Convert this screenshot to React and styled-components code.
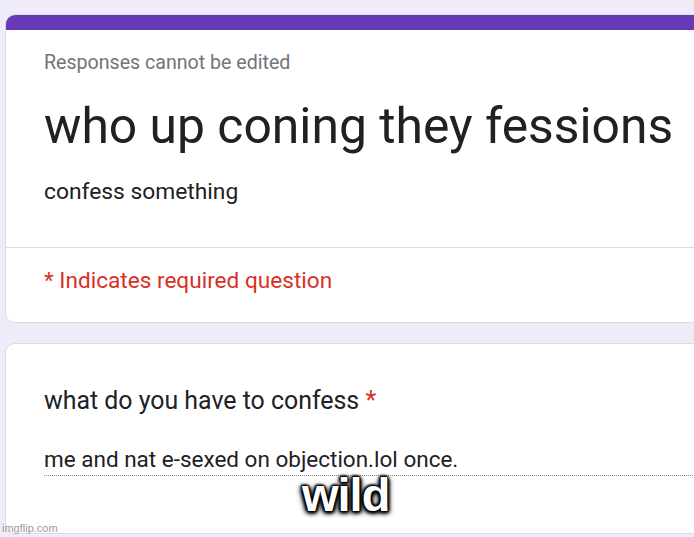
import React from "react";
import styled, { createGlobalStyle } from "styled-components";

const Global = createGlobalStyle`
  html, body { margin: 0; padding: 0; }
  body {
    background: #f0ebf8;
    font-family: Roboto, "Noto Sans", Arial, sans-serif;
    overflow: hidden;
  }
`;

const Page = styled.div`
  position: relative;
  width: 694px;
  height: 537px;
  overflow: hidden;
  padding: 14px 0 0 5px;
  box-sizing: border-box;
  display: flex;
  flex-direction: column;
  gap: 20px;
`;

const Card = styled.section`
  background: #fff;
  border: 1px solid #dadce0;
  border-radius: 10px;
  margin-right: -30px;
  overflow: hidden;
  display: flex;
  flex-direction: column;
`;

const Band = styled.div`
  height: 16px;
  background: #673ab7;
  margin: -1px -1px 0 -1px;
`;

const Section = styled.div`
  padding: ${(p) => p.$pad};
  display: flex;
  flex-direction: column;
  border-top: ${(p) => (p.$divider ? "1px solid #dadce0" : "none")};
`;

const Note = styled.div`
  font-size: 19.6px;
  color: #70757a;
  line-height: 24px;
`;

const Title = styled.h1`
  margin: 21px 0 0 0;
  font-weight: 400;
  font-size: 49.8px;
  line-height: 60px;
  color: #202124;
  white-space: nowrap;
`;

const Desc = styled.div`
  margin-top: 22px;
  font-size: 22.8px;
  line-height: 28px;
  color: #202124;
`;

const Required = styled.div`
  font-size: 22.6px;
  line-height: 28px;
  color: #d93025;
`;

const Question = styled.div`
  font-size: 24.9px;
  line-height: 30px;
  color: #202124;
`;

const Star = styled.span`
  color: #d93025;
`;

const Answer = styled.div`
  margin-top: 29px;
  font-size: 22.5px;
  line-height: 28px;
  color: #202124;
  padding-bottom: 2px;
  border-bottom: 1px dotted #8a8a8a;
  white-space: nowrap;
`;

const Meme = styled.div`
  position: absolute;
  left: 302px;
  top: 475px;
  font-family: "Liberation Sans", Arial, sans-serif;
  font-weight: 700;
  font-size: 47px;
  line-height: 40px;
  color: #fff;
  letter-spacing: -1px;
  -webkit-text-stroke: 1px #111;
  paint-order: stroke fill;
  text-shadow:
    0 0 2px #000, 0 0 3px #000, 0 0 4px #000, 1px 1px 3px #000,
    -1px -1px 3px #000, 2px 2px 5px #000, -2px 2px 5px #000;
`;

const Watermark = styled.div`
  position: absolute;
  left: 2px;
  bottom: 3px;
  font-family: "Liberation Sans", Arial, sans-serif;
  font-size: 11px;
  color: #9a9a9a;
`;

export default function App() {
  return (
    <>
      <Global />
      <Page>
        <Card>
          <Band />
          <Section $pad="21px 0 41px 38px">
            <Note>Responses cannot be edited</Note>
            <Title>who up coning they fessions</Title>
            <Desc>confess something</Desc>
          </Section>
          <Section $divider $pad="19px 0 27px 38px">
            <Required>* Indicates required question</Required>
          </Section>
        </Card>
        <Card>
          <Section $pad="42px 0 57px 38px">
            <Question>
              what do you have to confess <Star>*</Star>
            </Question>
            <Answer>me and nat e-sexed on objection.lol once.</Answer>
          </Section>
        </Card>
        <Meme>wild</Meme>
        <Watermark>imgflip.com</Watermark>
      </Page>
    </>
  );
}
